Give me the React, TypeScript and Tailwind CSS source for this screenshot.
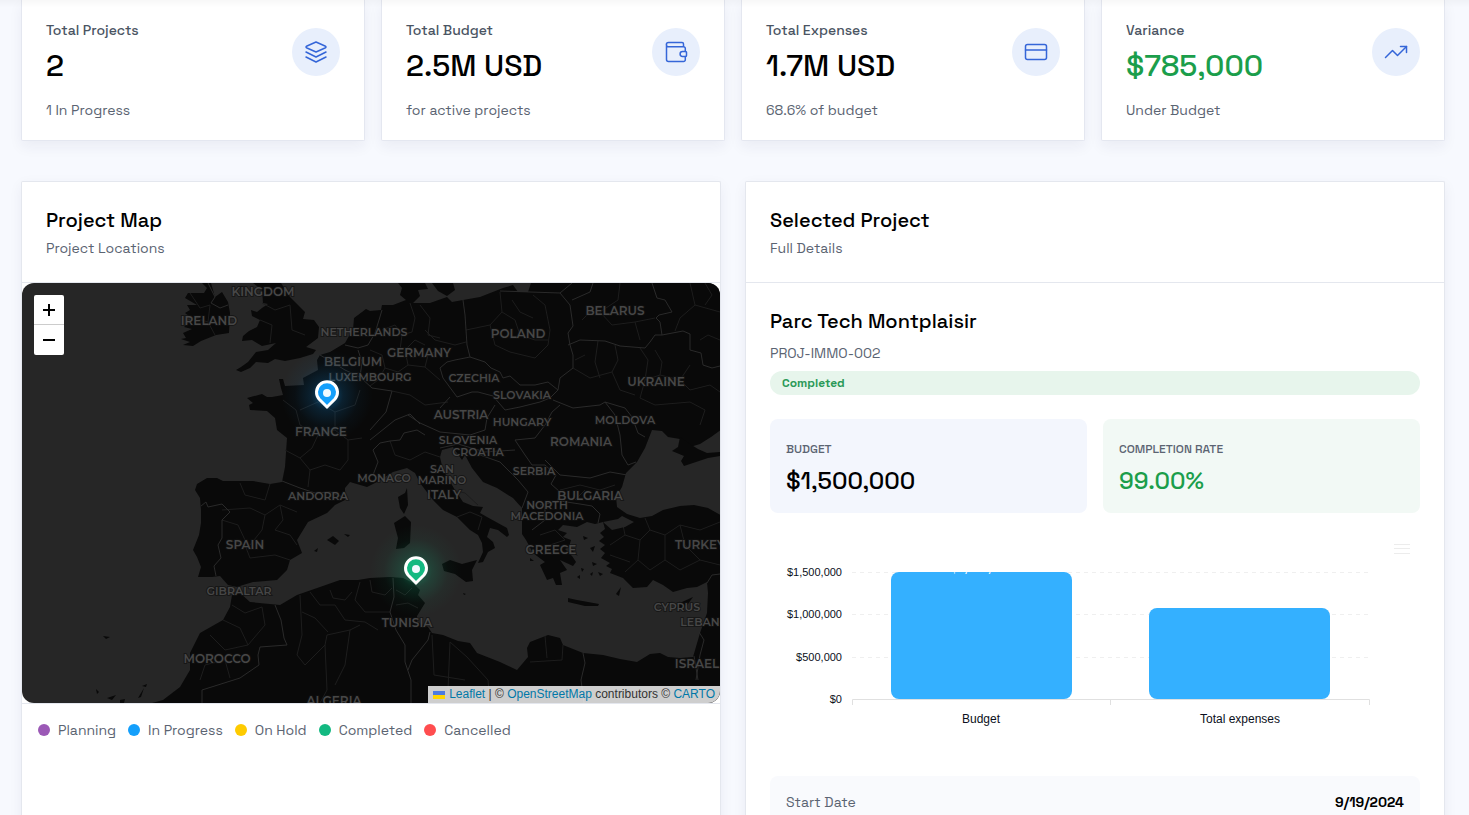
import type { ReactNode } from "react";

const LAND =
  "M720 283V703H152L163 700L180 687L190 670L190 653L200 633L223 620L230 607L232 595L240 593L250 602L280 605L297 595L320 587L340 580L358 580L370 578L390 577L403 578L413 583L420 590L418 595L425 603L417 616L417 622L428 627L432 633L443 635L458 641L470 643L477 653L500 662L517 670L528 657L527 648L530 642L548 635L560 638L563 645L583 653L603 655L620 659L637 662L650 654L660 653L668 657L680 658L693 657L700 633L707 613L708 593L707 582L697 587L687 588L673 592L663 585L653 580L647 587L633 588L623 578L610 573L612 569L606 566L610 563L601 558L605 553L600 549L605 545L599 541L604 537L600 533L605 529L603 522L595 524L587 522L577 527L563 525L558 530L567 533L563 537L571 540L569 547L565 549L572 556L576 562L573 566L560 560L567 570L560 573L562 585L556 585L553 578L547 580L540 565L545 562L533 553L526 540L522 534L522 508L513 498L497 488L483 482L472 468L465 455L462 460L457 453L453 447L442 450L440 457L443 470L455 490L463 502L473 506L483 507L480 513L487 517L507 528L509 535L507 537L498 530L490 528L487 537L493 542L495 548L488 552L483 562L478 563L483 552L482 543L478 535L470 530L457 517L443 510L433 500L420 483L415 473L407 468L393 472L377 482L367 487L350 482L345 488L345 500L335 505L327 513L308 522L297 540L302 553L290 560L287 570L277 580L253 582L243 585L237 587L228 585L220 576L212 577L198 577L201 567L197 557L193 550L199 535L201 523L201 510L200 498L195 490L197 484L207 478L217 478L223 481L253 481L270 484L282 482L285 467L287 438L277 430L275 418L267 411L250 410L249 405L253 403L247 398L262 394L267 397L272 397L283 395L281 388L279 379L283 379L285 386L304 385L303 378L318 370L317 360L320 355L330 352L345 343L349 336L353 330L354 318L366 309L370 311L381 310L382 305L393 305L406 300L400 295L402 288L398 283H425L428 289L418 290L420 296L413 303L430 303L447 297L452 302L463 300L480 297L503 288L513 285L518 292L528 292L531 283Z";

const BRITAIN =
  "M253 283L262 290L263 303L268 304L262 308L257 312L251 310L252 316L260 320L257 327L249 331L243 336L242 341L252 340L262 346L276 343L268 350L256 352L248 362L241 367L236 370L241 372L250 368L256 362L268 363L275 359L285 361L300 358L313 354L316 350L306 347L318 338L319 327L314 320L303 319L305 312L298 305L290 297L281 283Z";

const IRELAND =
  "M202 283L207 288L204 293L188 293L185 298L197 305L187 305L190 310L185 313L193 319L184 327L192 329L183 333L186 338L181 339L190 342L183 345L193 346L201 341L216 335L229 333L230 313L228 302L222 292L215 297L211 283Z";

const ISLANDS = [
  "M432 283H453L455 290L447 296L438 291Z",
  "M398 497L405 493L407 488L408 505L404 514L400 508Z",
  "M394 523L405 516L411 522L410 543L404 548L396 549L398 538Z",
  "M442 564L450 560L462 564L477 560L472 570L473 581L466 582L455 574L444 571Z",
  "M568 598L577 600L599 604L598 606L585 606L568 602Z",
  "M675 607L682 602L693 597L688 604L680 610Z",
  "M616 594L621 587L619 596Z",
  "M327 540L333 536L339 541L335 545Z",
  "M344 534L350 535L348 537Z",
  "M314 551L318 548L317 552Z",
  "M103 636L110 637L106 639Z",
  "M96 689L99 692L97 694Z",
  "M107 698L116 695L112 700Z",
  "M120 700L125 699L124 703H120Z",
  "M138 698L144 688L141 697Z",
  "M142 686L147 684L146 687Z",
  "M530 558L534 561L530 561Z",
  "M569 547L578 556L583 559L573 553Z",
  "M590 548L595 546L593 552Z",
  "M583 536L588 538L584 540Z",
  "M592 562L597 564L593 566Z",
  "M581 568L584 569L582 572Z",
  "M590 574L593 572L592 576Z",
  "M577 577L580 575L580 579Z",
  "M598 572L603 574L600 576Z",
  "M463 593L466 594L464 595Z",
];

const SEAS = [
  "M652 430L662 431L668 437L680 439L690 447L700 444L711 437L722 429V516L708 508L694 505L680 506L663 510L652 516L640 518L627 514L617 507L616 497L622 487L626 473L637 462L645 448Z",
  "M603 522L618 519L622 516L634 522L625 527L612 530Z",
];

const CRIMEA = "M680 437L690 444L698 449L707 453L720 452V456L708 458L693 463L684 466L681 461L684 456L672 451L678 447Z";

const BORDERS = [
  "M463 300L465 315L466 330L467 345L470 357L455 360L447 362L440 368L443 378L457 397L472 392L478 392L493 396L505 410L520 407L540 402L550 398L558 390",
  "M470 357L485 362L491 368L500 372L503 378L510 376L520 385L535 385L548 382L558 390L560 378L573 368L573 355L570 345L568 333L573 326L570 305L560 293L500 291",
  "M560 293L572 283M572 300L590 292L593 283M568 345L580 340L605 341L620 346L645 348L650 342L655 335L662 335L660 322L656 318L659 315L672 312L665 300L657 298L652 283",
  "M662 335L683 331L690 334L690 350L701 353L703 365L712 368L720 366",
  "M553 400L573 408L600 405L605 402L615 415L620 435L622 455L628 465L636 462M605 402L625 408L632 417L638 433L645 437",
  "M515 440L535 438L545 425L552 412L560 405M545 460L556 471L560 475L590 478L610 472L627 475",
  "M515 440L525 455L532 465L545 465L556 475L551 484L560 492L557 503",
  "M440 408L450 397M408 415L420 423L440 432L470 435L485 430L487 418L495 405",
  "M370 440L380 432L395 420L410 414L420 424M373 475L378 462L373 450L380 443L390 441L400 440L404 433L417 430L425 435",
  "M282 481L300 488L315 493L330 492L345 498M201 506L206 502L208 507L222 504L230 512L222 520L222 538L218 545L221 558L214 566L216 576",
  "M360 377L372 388L392 391L386 412L370 430M320 355L332 362L345 370L360 377L362 362L358 350M345 345L358 348L368 345L375 333L379 320L382 310",
  "M440 448L458 444L485 452L515 450M480 455L500 462L518 480L528 492L522 508M540 505L560 501L580 504L592 506L600 514L598 523M545 505L545 520L532 530",
  "M275 605L281 620L284 638L287 645L260 647L258 655L259 665L240 678L202 690V703",
  "M393 578L394 597L390 612L396 630L405 645L405 662L411 680V703M430 632L428 640L412 660L408 670",
  "M583 653L585 663L581 680L584 703M699 632L704 640L700 655L696 680M694 656L698 680M707 583L712 575L720 574",
  "M208 283L215 297L211 303L220 308L228 305",
];

const REGIONS = [
  "M466 330L490 325L502 312L500 292M490 325L495 345L510 352L535 358L548 345L550 330L545 305L533 295M502 312L515 320L520 335L535 340L548 340",
  "M408 365L425 367L440 380M392 391L410 395L425 405L448 402M425 330L435 340L455 345L466 342M420 305L430 318L428 335L440 338",
  "M573 368L590 378L612 372L620 390L635 395M598 341L595 362L600 378M615 345L618 360L612 372M640 348L648 360L645 380L660 375L680 380L690 365",
  "M620 283L618 300L600 312L612 325L635 322L640 340M635 322L655 318M690 283L695 305L680 318L675 331M695 305L720 312M645 380L640 398L655 405L690 402L705 410L700 425",
  "M285 450L300 458L312 448L318 435L300 425L296 410L283 400M300 410L318 402L322 388M318 402L335 412L355 405L360 390M335 412L335 430L348 440L362 438M318 435L335 430M300 458L310 470L325 465L340 470L348 460L348 440M310 470L308 487",
  "M222 510L250 508L265 515L280 505L297 512M228 540L245 545L250 558L275 555L290 560M265 515L262 530L250 545M280 505L283 520L275 530L290 535L297 545M240 483L245 495L265 500L270 484M222 520L238 525L245 540",
  "M232 605L245 613L262 607M223 620L240 628L248 645L225 650L210 635M262 607L265 625L248 645M200 680L205 665L225 660L230 678M300 595L302 635L297 655L305 665L325 645L327 635L350 630L360 625M325 645L327 690L320 703M350 630L345 665L335 685M302 612L315 618L328 632M310 592L320 605L335 605L345 620M360 582L355 600L365 612L390 612",
  "M432 635L434 675M450 642L467 657L488 680L490 703M450 642L448 690M545 636L547 658M563 645L562 660L530 662M434 675L465 680",
  "M610 545L625 535L640 540L650 530L665 535L680 525L700 530L720 522M625 535L622 520M640 540L638 560L650 570L665 560L680 570L700 560L720 565M665 535L665 560M680 525L685 545L700 560M650 530L645 518M610 555L630 562M638 560L625 572",
  "M560 490L580 485L600 490L615 485M575 500L585 490M540 535L555 530L565 540L550 545L545 555",
  "M452 490L465 493L478 505M457 517L470 512L482 517L478 530M390 441L395 455L410 460L425 452L440 457",
  "M262 303L275 310L290 305M260 320L272 325L270 343M290 305L292 330L305 335",
  "M382 330L395 325L402 335L412 332L415 318L410 303M370 350L382 355L385 368L378 380L370 386M385 368L398 372L408 365L405 350L415 340L425 345M402 335L400 350M425 367L428 355L440 350",
  "M585 355L575 360M660 375L662 362L655 350M720 340L708 335L700 340M705 283L712 295L705 305M680 380L690 390L710 385L720 392M582 320L590 312L600 312M533 318L520 312L512 300",
  "M190 293L200 308L210 305M195 318L208 322L215 335M210 305L208 322",
  "M330 590L333 598L345 600L352 592M370 580L372 592L385 595L392 588M345 620L365 622L378 630M396 590L405 595L412 588M396 605L408 603L418 608",
];

const LABELS: { text: string; x: number; y: number; size: number }[] = [
  { text: "KINGDOM", x: 263, y: 296, size: 12 },
  { text: "IRELAND", x: 209, y: 325, size: 12 },
  { text: "NETHERLANDS", x: 364, y: 336, size: 11 },
  { text: "BELGIUM", x: 353, y: 366, size: 12 },
  { text: "LUXEMBOURG", x: 370, y: 381, size: 11 },
  { text: "GERMANY", x: 419, y: 357, size: 12 },
  { text: "POLAND", x: 518, y: 338, size: 12 },
  { text: "BELARUS", x: 615, y: 315, size: 12 },
  { text: "CZECHIA", x: 474, y: 382, size: 11 },
  { text: "SLOVAKIA", x: 522, y: 399, size: 11 },
  { text: "UKRAINE", x: 656, y: 386, size: 12 },
  { text: "AUSTRIA", x: 461, y: 419, size: 12 },
  { text: "HUNGARY", x: 522, y: 426, size: 11 },
  { text: "MOLDOVA", x: 625, y: 424, size: 11 },
  { text: "SLOVENIA", x: 468, y: 444, size: 11 },
  { text: "CROATIA", x: 478, y: 456, size: 11 },
  { text: "ROMANIA", x: 581, y: 446, size: 12 },
  { text: "FRANCE", x: 321, y: 436, size: 12 },
  { text: "SERBIA", x: 534, y: 475, size: 11 },
  { text: "MONACO", x: 384, y: 482, size: 11 },
  { text: "SAN", x: 442, y: 473, size: 11 },
  { text: "MARINO", x: 442, y: 484, size: 11 },
  { text: "ITALY", x: 444, y: 499, size: 12 },
  { text: "ANDORRA", x: 318, y: 500, size: 11 },
  { text: "BULGARIA", x: 590, y: 500, size: 12 },
  { text: "NORTH", x: 547, y: 509, size: 11 },
  { text: "MACEDONIA", x: 547, y: 520, size: 11 },
  { text: "SPAIN", x: 245, y: 549, size: 12 },
  { text: "GREECE", x: 551, y: 554, size: 12 },
  { text: "TURKEY", x: 700, y: 549, size: 12 },
  { text: "GIBRALTAR", x: 239, y: 595, size: 11 },
  { text: "CYPRUS", x: 677, y: 611, size: 11 },
  { text: "TUNISIA", x: 407, y: 627, size: 12 },
  { text: "LEBANON", x: 709, y: 626, size: 11 },
  { text: "MOROCCO", x: 217, y: 663, size: 12 },
  { text: "ISRAEL", x: 697, y: 668, size: 12 },
  { text: "ALGERIA", x: 334, y: 705, size: 12 },
];

const STATUSES = [
  { label: "Planning", dot: "bg-[#9b59b6]" },
  { label: "In Progress", dot: "bg-[#149ffb]" },
  { label: "On Hold", dot: "bg-[#fecb00]" },
  { label: "Completed", dot: "bg-[#13b981]" },
  { label: "Cancelled", dot: "bg-[#ff4d4f]" },
];

const TICKS = [
  { label: "$1,500,000", y: 572 },
  { label: "$1,000,000", y: 614 },
  { label: "$500,000", y: 657 },
  { label: "$0", y: 699 },
];

function Icon({ children }: { children: ReactNode }) {
  return (
    <svg
      className="size-6"
      viewBox="0 0 24 24"
      fill="none"
      stroke="currentColor"
      strokeWidth="1.5"
      strokeLinecap="round"
      strokeLinejoin="round"
      aria-hidden="true"
    >
      {children}
    </svg>
  );
}

const STATS = [
  {
    label: "Total Projects",
    value: "2",
    note: "1 In Progress",
    color: "text-black",
    icon: (
      <Icon>
        <path d="M12 2 21 6Q23 7 21 8L12 12 3 8Q1 7 3 6Z" />
        <path d="M2 12l10 5 10-5M2 17l10 5 10-5" />
      </Icon>
    ),
  },
  {
    label: "Total Budget",
    value: "2.5M USD",
    note: "for active projects",
    color: "text-black",
    icon: (
      <Icon>
        <path d="M19.500 6.500V4a1.500 1.500 0 0 0-1.500-1.500H4.500a2 2 0 0 0 0 4.300H19.500a1.800 1.800 0 0 1 1.800 1.800v2.900M21.300 16.400v3.300a1.800 1.800 0 0 1-1.800 1.800H4.500a2 2 0 0 1-2-2V4.500" />
        <path d="M18.500 11.600h3.200a.8.800 0 0 1 .8.800v3.200a.8.800 0 0 1-.8.800h-3.200a2.400 2.400 0 0 1 0-4.800Z" />
      </Icon>
    ),
  },
  {
    label: "Total Expenses",
    value: "1.7M USD",
    note: "68.6% of budget",
    color: "text-black",
    icon: (
      <Icon>
        <rect x="1.500" y="4.500" width="21" height="15" rx="2" />
        <path d="M1.500 10h21" />
      </Icon>
    ),
  },
  {
    label: "Variance",
    value: "$785,000",
    note: "Under Budget",
    color: "text-[#1b9e4b]",
    icon: (
      <Icon>
        <path d="M22.500 6.500 13.500 15.500 8.500 10.500 1.500 17.500" />
        <path d="M16.500 6.500h6v6" />
      </Icon>
    ),
  },
];

function Pin({ x, y, color, glow }: { x: number; y: number; color: string; glow: string }) {
  return (
    <g>
      <circle cx={x} cy={y + 2} r="46" fill={`url(#${glow})`} />
      <path
        d={`M${x} ${y + 14}L${x - 8} ${y + 6}A10.500 10.500 0 1 1 ${x + 8} ${y + 6}Z`}
        fill={color}
        stroke="#fff"
        strokeWidth="3"
      />
      <circle cx={x} cy={y} r="4" fill="#f1faff" />
    </g>
  );
}

function EuropeMap() {
  return (
    <svg
      className="block h-full w-full"
      viewBox="22 283 698 420"
      preserveAspectRatio="xMidYMid slice"
      role="img"
      aria-label="Map of project locations"
    >
      <defs>
        <radialGradient id="glow-blue">
          <stop offset="0" stopColor="#149ffb" stopOpacity="0.5" />
          <stop offset="0.35" stopColor="#149ffb" stopOpacity="0.16" />
          <stop offset="0.7" stopColor="#149ffb" stopOpacity="0.04" />
          <stop offset="1" stopColor="#149ffb" stopOpacity="0" />
        </radialGradient>
        <radialGradient id="glow-green">
          <stop offset="0" stopColor="#13b981" stopOpacity="0.5" />
          <stop offset="0.35" stopColor="#13b981" stopOpacity="0.18" />
          <stop offset="0.7" stopColor="#13b981" stopOpacity="0.04" />
          <stop offset="1" stopColor="#13b981" stopOpacity="0" />
        </radialGradient>
      </defs>
      <rect x="22" y="283" width="698" height="420" fill="#262626" />
      <g fill="#090909">
        <path d={LAND} />
        <path d={BRITAIN} />
        <path d={IRELAND} />
        {ISLANDS.map((d) => (
          <path key={d} d={d} />
        ))}
      </g>
      <g fill="none" stroke="#1d1d1d" strokeWidth="1" strokeLinejoin="round">
        {REGIONS.map((d) => (
          <path key={d} d={d} />
        ))}
      </g>
      <g fill="none" stroke="#2a2a2a" strokeWidth="1" strokeLinejoin="round">
        {BORDERS.map((d) => (
          <path key={d} d={d} />
        ))}
      </g>
      <g fill="#262626">
        {SEAS.map((d) => (
          <path key={d} d={d} />
        ))}
      </g>
      <path d={CRIMEA} fill="#090909" />
      <g
        fill="#474747"
        stroke="#111"
        strokeWidth="2"
        strokeOpacity="0.7"
        paintOrder="stroke"
        textAnchor="middle"
        className="font-['Montserrat','Inter',sans-serif] font-semibold"
      >
        {LABELS.map((l) => (
          <text key={l.text} x={l.x} y={l.y} fontSize={l.size}>
            {l.text}
          </text>
        ))}
      </g>
      <Pin x={327} y={393} color="#149ffb" glow="glow-blue" />
      <Pin x={416} y={569} color="#13b981" glow="glow-green" />
    </svg>
  );
}

function BudgetChart() {
  return (
    <svg
      className="block w-full font-['Liberation_Sans',Arial,sans-serif]"
      viewBox="770 537 650 215"
      role="img"
      aria-label="Budget and total expenses"
    >
      <g stroke="#efefef" strokeDasharray="4 4">
        <path d="M852 572.500H1369M852 614.500H1369M852 657.500H1369" />
      </g>
      <path d="M852.500 705V699.500H1369.500V705M1110.500 699V705" fill="none" stroke="#e0e0e0" />
      <rect x="891" y="572" width="181" height="127" rx="8" fill="#34b0ff" />
      <rect x="1149" y="608" width="181" height="91" rx="8" fill="#34b0ff" />
      <text x="981" y="572" fontSize="12" fontWeight="600" fill="#fff" textAnchor="middle">
        $1,500,000
      </text>
      {TICKS.map((t) => (
        <text key={t.label} x="842" y={t.y + 4} fontSize="11" fill="#0b1020" textAnchor="end">
          {t.label}
        </text>
      ))}
      <g fontSize="12" fill="#0b1020" textAnchor="middle">
        <text x="981" y="723">Budget</text>
        <text x="1240" y="723">Total expenses</text>
      </g>
    </svg>
  );
}

function PanelHeader({ title, subtitle }: { title: string; subtitle: string }) {
  return (
    <header className="border-b border-[#e4e7ee] p-6">
      <h2 className="text-xl leading-7 font-medium text-black">{title}</h2>
      <p className="mt-1 text-sm leading-5 text-[#5b6472]">{subtitle}</p>
    </header>
  );
}

export default function App() {
  return (
    <main className="relative flex h-screen flex-col gap-10 overflow-hidden bg-[#f7f9fe] pr-6 pl-[21px] font-['Space_Grotesk','Inter',sans-serif]">
      {/* Soft shadow of the sticky page header */}
      <div className="pointer-events-none absolute inset-x-0 top-0 h-2 bg-linear-to-b from-black/3 to-transparent" />

      <section className="grid shrink-0 grid-cols-4 gap-4">
        {STATS.map((s) => (
          <article
            key={s.label}
            className="flex items-start justify-between rounded-b-xs border border-t-0 border-[#e4e7f0] bg-white px-6 py-5 shadow-[0_6px_14px_rgba(30,41,80,0.06)]"
          >
            <div>
              <h3 className="text-sm font-medium text-[#4b5563]">{s.label}</h3>
              <p className={`mt-2 mb-4 text-3xl leading-9 font-medium ${s.color}`}>{s.value}</p>
              <p className="text-sm text-[#5b6472]">{s.note}</p>
            </div>
            <span className="mt-2 flex size-12 items-center justify-center rounded-full bg-[#e8effc] text-[#3566d8]">
              {s.icon}
            </span>
          </article>
        ))}
      </section>

      <section className="grid grow grid-cols-2 gap-6">
        <article className="rounded-t-xs border border-b-0 border-[#e4e7ee] bg-white shadow-[0_4px_14px_rgba(30,41,80,0.06)]">
          <PanelHeader title="Project Map" subtitle="Project Locations" />
          <div className="relative h-[420px] overflow-hidden rounded-xl">
            <EuropeMap />
            <div className="absolute top-3 left-3 flex flex-col overflow-hidden rounded-xs bg-white">
              <button
                type="button"
                aria-label="Zoom in"
                className="flex size-[30px] items-center justify-center border-b border-[#ccc] text-black"
              >
                <svg className="size-3" viewBox="0 0 12 12" stroke="currentColor" strokeWidth="2">
                  <path d="M0 6h12M6 0v12" />
                </svg>
              </button>
              <button
                type="button"
                aria-label="Zoom out"
                className="flex size-[30px] items-center justify-center text-black"
              >
                <svg className="size-3" viewBox="0 0 12 12" stroke="currentColor" strokeWidth="2">
                  <path d="M0 6h12" />
                </svg>
              </button>
            </div>
            <div className="absolute right-0 bottom-0 flex items-center gap-1 bg-white/80 px-[5px] font-['Liberation_Sans',Arial,sans-serif] text-xs leading-[17px] text-[#333]">
              <svg className="h-2 w-3" viewBox="0 0 12 8" aria-hidden="true">
                <path fill="#4c7be1" d="M0 0h12v4H0z" />
                <path fill="#ffd500" d="M0 4h12v4H0z" />
              </svg>
              <p>
                <a href="#leaflet" className="text-[#0078a8]">Leaflet</a> | ©{" "}
                <a href="#openstreetmap" className="text-[#0078a8]">OpenStreetMap</a> contributors ©{" "}
                <a href="#carto" className="text-[#0078a8]">CARTO</a>
              </p>
            </div>
          </div>
          <ul className="flex flex-wrap gap-3 border-t border-[#e4e7ee] p-4 text-sm text-[#5b6472]">
            {STATUSES.map((s) => (
              <li key={s.label} className="flex items-center gap-2">
                <span className={`size-3 rounded-full ${s.dot}`} />
                {s.label}
              </li>
            ))}
          </ul>
        </article>

        <article className="rounded-t-xs border border-b-0 border-[#e4e7ee] bg-white shadow-[0_4px_14px_rgba(30,41,80,0.06)]">
          <PanelHeader title="Selected Project" subtitle="Full Details" />
          <div className="p-6">
            <h3 className="text-xl leading-7 font-medium text-black">Parc Tech Montplaisir</h3>
            <p className="mt-2 text-sm text-[#5b6472]">PROJ-IMMO-002</p>
            <p className="mt-2 rounded-full bg-[#e7f5ec] px-3 py-1 text-xs font-semibold text-[#2b9a58]">
              Completed
            </p>

            <div className="mt-6 grid grid-cols-2 gap-4">
              <div className="rounded-lg bg-[#f3f6fd] px-4 pt-5 pb-[14px]">
                <h4 className="text-xs leading-5 font-medium text-[#5b6472]">BUDGET</h4>
                <p className="mt-1 text-2xl leading-9 font-medium text-black">$1,500,000</p>
              </div>
              <div className="rounded-lg bg-[#f2f9f5] px-4 pt-5 pb-[14px]">
                <h4 className="text-xs leading-5 font-medium text-[#5b6472]">COMPLETION RATE</h4>
                <p className="mt-1 text-2xl leading-9 font-medium text-[#1b9e4b]">99.00%</p>
              </div>
            </div>

            <div className="relative mt-6 pb-6">
              <BudgetChart />
              <button type="button" aria-label="Chart menu" className="absolute top-0 right-[6px] p-1 text-[#ececec]">
                <svg className="size-4" viewBox="0 0 16 16" stroke="currentColor" strokeWidth="1">
                  <path d="M0 3.500h16M0 7.500h16M0 12.500h16" />
                </svg>
              </button>
            </div>

            <dl className="flex justify-between rounded-lg bg-[#f9fafd] p-4 text-sm">
              <dt className="text-[#5b6472]">Start Date</dt>
              <dd className="font-semibold text-black">9/19/2024</dd>
            </dl>
          </div>
        </article>
      </section>
    </main>
  );
}
